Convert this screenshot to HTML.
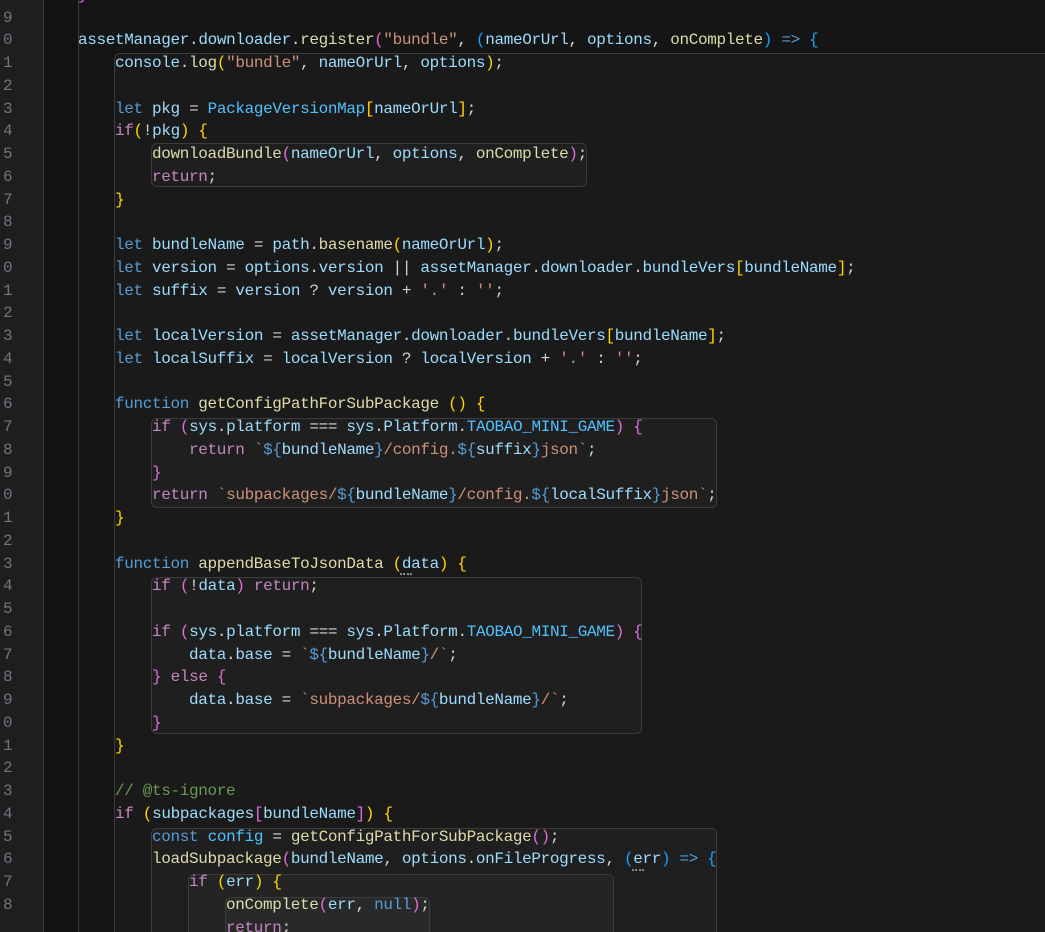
<!DOCTYPE html>
<html style="overflow:hidden"><head><meta charset="utf-8"><style>
html,body{margin:0;width:1045px;height:932px;overflow:hidden;background:#151515;}
#w{position:relative;width:1045px;height:932px;overflow:hidden;background:#151515;font-family:"Liberation Mono",monospace;}
.g{position:absolute;left:0;top:0;width:43px;height:932px;background:#1e1e1e;}
.band{position:absolute;left:43px;top:0;width:34px;height:932px;background:#121212;border-left:1px solid #3a3a3a;border-right:1px solid #3a3a3a;}
.box{position:absolute;border:1px solid #3c3c3c;border-radius:6px;background:rgba(255,255,255,0.025);box-sizing:border-box;}
.clip{position:absolute;left:0;top:0;width:1045px;height:932px;overflow:hidden;}
pre{position:absolute;margin:0;font-family:"Liberation Mono",monospace;font-size:16px;letter-spacing:-0.35px;line-height:22.75px;color:#d4d4d4;white-space:pre;}
.code{left:41px;top:-16.15px;}
.ln{left:3px;top:-16.15px;color:#6e7681;}
.k{color:#569cd6}.c{color:#c586c0}.v{color:#9cdcfe}.f{color:#dcdcaa}.s{color:#ce9178}.n{color:#4fc1ff}
.b1{color:#ffd700}.b2{color:#da70d6}.b3{color:#179fff}.cm{color:#6a9955}
.dots{position:absolute;width:12px;height:2px;border-top:2px dotted #888;}
</style></head><body><div id="w">
<div class="g"></div><div class="band"></div>
<div class="box" style="left:114px;top:53px;width:960px;height:900px;"></div>
<div class="box" style="left:151px;top:143px;width:436px;height:44px;"></div>
<div class="box" style="left:151px;top:418px;width:566px;height:90px;"></div>
<div class="box" style="left:151px;top:577px;width:491px;height:157px;"></div>
<div class="box" style="left:151px;top:828px;width:566px;height:120px;"></div>
<div class="box" style="left:188px;top:874px;width:426px;height:80px;"></div>
<div class="box" style="left:225px;top:897px;width:205px;height:60px;"></div>
<div class="dots" style="left:400px;top:573px;"></div>
<div class="dots" style="left:632px;top:869px;"></div>
<div class="clip">
<pre class="ln">8
9
0
1
2
3
4
5
6
7
8
9
0
1
2
3
4
5
6
7
8
9
0
1
2
3
4
5
6
7
8
9
0
1
2
3
4
5
6
7
8</pre>
<pre class="code">    <span class="b2">}</span>

    <span class="v">assetManager</span>.<span class="v">downloader</span>.<span class="f">register</span><span class="b2">(</span><span class="s">"bundle"</span>, <span class="b3">(</span><span class="v">nameOrUrl</span>, <span class="v">options</span>, <span class="f">onComplete</span><span class="b3">)</span> <span class="k">=&gt;</span> <span class="b3">{</span>
        <span class="v">console</span>.<span class="f">log</span><span class="b1">(</span><span class="s">"bundle"</span>, <span class="v">nameOrUrl</span>, <span class="v">options</span><span class="b1">)</span>;

        <span class="k">let</span> <span class="v">pkg</span> = <span class="n">PackageVersionMap</span><span class="b1">[</span><span class="v">nameOrUrl</span><span class="b1">]</span>;
        <span class="c">if</span><span class="b1">(</span>!<span class="v">pkg</span><span class="b1">)</span> <span class="b1">{</span>
            <span class="f">downloadBundle</span><span class="b2">(</span><span class="v">nameOrUrl</span>, <span class="v">options</span>, <span class="f">onComplete</span><span class="b2">)</span>;
            <span class="c">return</span>;
        <span class="b1">}</span>

        <span class="k">let</span> <span class="v">bundleName</span> = <span class="v">path</span>.<span class="f">basename</span><span class="b1">(</span><span class="v">nameOrUrl</span><span class="b1">)</span>;
        <span class="k">let</span> <span class="v">version</span> = <span class="v">options</span>.<span class="v">version</span> || <span class="v">assetManager</span>.<span class="v">downloader</span>.<span class="v">bundleVers</span><span class="b1">[</span><span class="v">bundleName</span><span class="b1">]</span>;
        <span class="k">let</span> <span class="v">suffix</span> = <span class="v">version</span> ? <span class="v">version</span> + <span class="s">'.'</span> : <span class="s">''</span>;

        <span class="k">let</span> <span class="v">localVersion</span> = <span class="v">assetManager</span>.<span class="v">downloader</span>.<span class="v">bundleVers</span><span class="b1">[</span><span class="v">bundleName</span><span class="b1">]</span>;
        <span class="k">let</span> <span class="v">localSuffix</span> = <span class="v">localVersion</span> ? <span class="v">localVersion</span> + <span class="s">'.'</span> : <span class="s">''</span>;

        <span class="k">function</span> <span class="f">getConfigPathForSubPackage</span> <span class="b1">()</span> <span class="b1">{</span>
            <span class="c">if</span> <span class="b2">(</span><span class="v">sys</span>.<span class="v">platform</span> === <span class="v">sys</span>.<span class="v">Platform</span>.<span class="n">TAOBAO_MINI_GAME</span><span class="b2">)</span> <span class="b2">{</span>
                <span class="c">return</span> <span class="s">`</span><span class="k">${</span><span class="v">bundleName</span><span class="k">}</span><span class="s">/config.</span><span class="k">${</span><span class="v">suffix</span><span class="k">}</span><span class="s">json`</span>;
            <span class="b2">}</span>
            <span class="c">return</span> <span class="s">`subpackages/</span><span class="k">${</span><span class="v">bundleName</span><span class="k">}</span><span class="s">/config.</span><span class="k">${</span><span class="v">localSuffix</span><span class="k">}</span><span class="s">json`</span>;
        <span class="b1">}</span>

        <span class="k">function</span> <span class="f">appendBaseToJsonData</span> <span class="b1">(</span><span class="v">data</span><span class="b1">)</span> <span class="b1">{</span>
            <span class="c">if</span> <span class="b2">(</span>!<span class="v">data</span><span class="b2">)</span> <span class="c">return</span>;

            <span class="c">if</span> <span class="b2">(</span><span class="v">sys</span>.<span class="v">platform</span> === <span class="v">sys</span>.<span class="v">Platform</span>.<span class="n">TAOBAO_MINI_GAME</span><span class="b2">)</span> <span class="b2">{</span>
                <span class="v">data</span>.<span class="v">base</span> = <span class="s">`</span><span class="k">${</span><span class="v">bundleName</span><span class="k">}</span><span class="s">/`</span>;
            <span class="b2">}</span> <span class="c">else</span> <span class="b2">{</span>
                <span class="v">data</span>.<span class="v">base</span> = <span class="s">`subpackages/</span><span class="k">${</span><span class="v">bundleName</span><span class="k">}</span><span class="s">/`</span>;
            <span class="b2">}</span>
        <span class="b1">}</span>

        <span class="cm">// @ts-ignore</span>
        <span class="c">if</span> <span class="b1">(</span><span class="v">subpackages</span><span class="b2">[</span><span class="v">bundleName</span><span class="b2">]</span><span class="b1">)</span> <span class="b1">{</span>
            <span class="k">const</span> <span class="n">config</span> = <span class="f">getConfigPathForSubPackage</span><span class="b2">()</span>;
            <span class="f">loadSubpackage</span><span class="b2">(</span><span class="v">bundleName</span>, <span class="v">options</span>.<span class="v">onFileProgress</span>, <span class="b3">(</span><span class="v">err</span><span class="b3">)</span> <span class="k">=&gt;</span> <span class="b3">{</span>
                <span class="c">if</span> <span class="b1">(</span><span class="v">err</span><span class="b1">)</span> <span class="b1">{</span>
                    <span class="f">onComplete</span><span class="b2">(</span><span class="v">err</span>, <span class="k">null</span><span class="b2">)</span>;
                    <span class="c">return</span>;</pre>
</div>
</div></body></html>
